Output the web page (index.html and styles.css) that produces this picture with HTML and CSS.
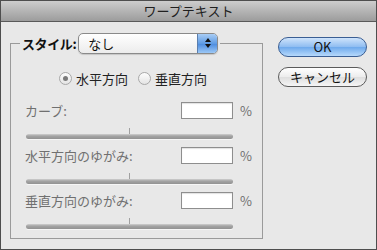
FILE: index.html
```html
<!DOCTYPE html>
<html lang="ja">
<head>
	<meta charset="UTF-8">
	<title>ワープテキスト</title>
	<link rel="stylesheet" href="styles.css">
</head>
<body>
	<div class="window">
		<div class="titlebar">ワープテキスト</div>
		<div class="content">
			<fieldset class="group">
				<legend class="legend">
					<span class="legend-label">スタイル:</span>
					<span class="popup">
						<span class="popup-text">なし</span>
						<span class="popup-arrows">
							<svg width="8" height="12" viewBox="0 0 8 12"><path d="M4 1 L7 5 L1 5 Z" fill="#111"/><path d="M1 7 L7 7 L4 11 Z" fill="#111"/></svg>
						</span>
					</span>
				</legend>
				<div class="radios">
					<label class="radio"><span class="dot checked"></span>水平方向</label>
					<label class="radio"><span class="dot"></span>垂直方向</label>
				</div>
				<div class="field">
					<div class="row">
						<span class="label">カーブ:</span>
						<span class="input"></span>
						<span class="pct">%</span>
					</div>
					<div class="slider"><span class="tick"></span></div>
				</div>
				<div class="field">
					<div class="row">
						<span class="label">水平方向のゆがみ:</span>
						<span class="input"></span>
						<span class="pct">%</span>
					</div>
					<div class="slider"><span class="tick"></span></div>
				</div>
				<div class="field">
					<div class="row">
						<span class="label">垂直方向のゆがみ:</span>
						<span class="input"></span>
						<span class="pct">%</span>
					</div>
					<div class="slider"><span class="tick"></span></div>
				</div>
			</fieldset>
			<div class="buttons">
				<div class="btn btn-ok">OK</div>
				<div class="btn">キャンセル</div>
			</div>
		</div>
	</div>
</body>
</html>
```

FILE: styles.css
```css
*{margin: 0;padding: 0;box-sizing: border-box;}
body{font-family: "Noto Sans CJK JP", "Liberation Sans", sans-serif;font-size: 13px;color: #1a1a1a;background: #e8e8e8;}
.window{width: 377px;height: 250px;border: 1px solid #4e4e4e;background: #e8e8e8;display: flex;flex-direction: column;}
.titlebar{height: 21px;line-height: 20px;text-align: center;font-size: 13px;color: #202020;background: linear-gradient(#cdcdcd, #9c9c9c);border-bottom: 1px solid #5a5a5a;}
.content{display: flex;padding: 10px 0 0 9px;}

/* 左側のグループ */
.group{width: 253px;height: 207px;border: 1px solid #9a9a9a;padding: 0 0 0 14px;}
.legend{margin-left: -5px;padding: 0 2px 0 2px;display: flex;align-items: center;gap: 2px;height: 22px;}
.legend-label{font-weight: bold;color: #111;letter-spacing: -0.4px;}
.popup{display: flex;width: 140px;height: 21px;border: 1px solid #8a8a8a;border-radius: 5px;overflow: hidden;background: linear-gradient(#ffffff, #ececec);box-shadow: 0 1px 1px rgba(0,0,0,0.15);}
.popup-text{flex: 1;padding-left: 9px;line-height: 19px;color: #111;}
.popup-arrows{width: 20px;display: flex;align-items: center;justify-content: center;background: linear-gradient(#a9cdf5, #5f9be3 50%, #4a8ade 51%, #9cc8f6);border-left: 1px solid #5b7fae;}

.radios{display: flex;gap: 10px;margin: 16px 0 0 34px;height: 16px;align-items: center;}
.radio{display: flex;align-items: center;gap: 4px;color: #222;}
.dot{width: 13px;height: 13px;border-radius: 50%;border: 1px solid #a8a8a8;background: linear-gradient(#fdfdfd, #e4e4e4);display: flex;align-items: center;justify-content: center;}
.dot.checked::after{content: "";width: 5px;height: 5px;border-radius: 50%;background: #7a7a7a;}

.field{height: 45px;}
.radios + .field{margin-top: 16px;}
.row{display: flex;align-items: center;height: 17px;}
.label{width: 156px;color: #707070;}
.input{width: 52px;height: 17px;background: #fff;border: 1px solid #8e8e8e;box-shadow: inset 0 1px 1px rgba(0,0,0,0.12);}
.pct{margin-left: 7px;color: #707070;}
.slider{position: relative;width: 207px;height: 5px;margin: 15px 0 0 1px;border-radius: 3px;background: linear-gradient(#d0d0d0, #a4a4a4 40%, #929292);box-shadow: 0 1px 0 #f6f6f6;}
.tick{position: absolute;left: 103px;top: -6px;width: 1px;height: 6px;background: #a0a0a0;}

/* ボタン */
.buttons{margin: 5px 0 0 15px;display: flex;flex-direction: column;gap: 10px;}
.btn{width: 89px;height: 20px;border: 1px solid #5b5b5b;border-radius: 10px;text-align: center;line-height: 18px;color: #111;background: linear-gradient(#ffffff, #ececec 50%, #dedede 51%, #f5f5f5);}
.btn-ok{border-color: #3a5e93;background: linear-gradient(#cfe4fb, #8ebcf1 50%, #6ea9ec 51%, #b6d9fb);}
```
